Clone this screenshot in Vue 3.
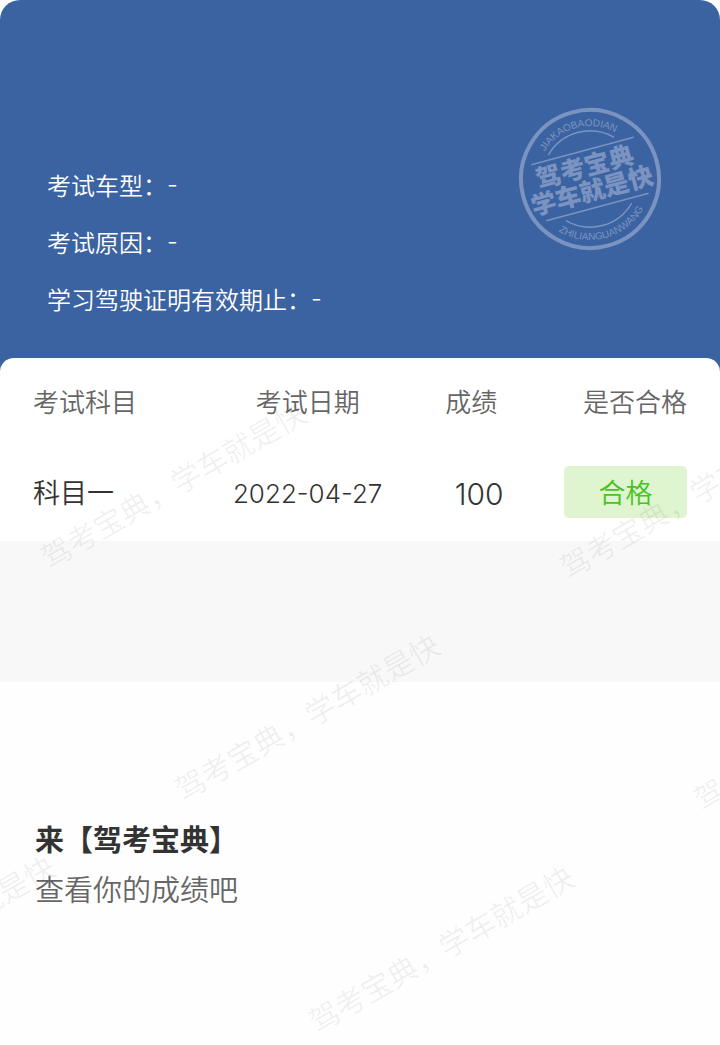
<script setup>
const info = [
  { label: '考试车型', value: '-' },
  { label: '考试原因', value: '-' },
  { label: '学习驾驶证明有效期止', value: '-' },
]

const results = [
  { subject: '科目一', date: '2022-04-27', score: '100', status: '合格' },
]

const marks = [
  { x: 49, y: 570 },
  { x: 568, y: 580 },
  { x: 183, y: 802 },
  { x: 702, y: 812 },
  { x: -202, y: 1024 },
  { x: 317, y: 1034 },
]
</script>

<template>
  <main class="page">
    <header class="hero">
      <dl class="info">
        <div v-for="item in info" :key="item.label" class="info-row">
          <dt>{{ item.label }}：</dt>
          <dd>{{ item.value }}</dd>
        </div>
      </dl>
      <svg class="stamp" viewBox="-72 -72 144 144" role="img" aria-label="驾考宝典 学车就是快">
        <defs>
          <path id="stamp-top" d="M-53 0A53 53 0 0 1 53 0" />
          <path id="stamp-bottom" d="M-61 0A61 61 0 0 0 61 0" />
        </defs>
        <g transform="rotate(-15)">
          <circle r="69" fill="none" stroke="currentColor" stroke-width="4" />
          <path
            d="M-34 -34A48 48 0 0 1 34 -34M-34 34A48 48 0 0 0 34 34M-53 -29H53M-53 29H53"
            fill="none"
            stroke="currentColor"
            stroke-width="1.4"
          />
          <text class="stamp-small" text-anchor="middle">
            <textPath href="#stamp-top" startOffset="50%">JIAKAOBAODIAN</textPath>
          </text>
          <text class="stamp-small" text-anchor="middle">
            <textPath href="#stamp-bottom" startOffset="50%">ZHILIANGUANWANG</textPath>
          </text>
          <text class="stamp-title" x="-2" y="-4" text-anchor="middle">驾考宝典</text>
          <text class="stamp-title" x="-1" y="21" text-anchor="middle">学车就是快</text>
        </g>
      </svg>
    </header>

    <section class="card">
      <table class="scores">
        <thead>
          <tr>
            <th class="subject" scope="col">考试科目</th>
            <th class="date" scope="col">考试日期</th>
            <th class="score" scope="col">成绩</th>
            <th class="status" scope="col">是否合格</th>
          </tr>
        </thead>
        <tbody>
          <tr v-for="row in results" :key="row.subject">
            <td class="subject">{{ row.subject }}</td>
            <td class="date">{{ row.date }}</td>
            <td class="score">{{ row.score }}</td>
            <td class="status"><span class="badge">{{ row.status }}</span></td>
          </tr>
        </tbody>
      </table>
    </section>

    <div class="band"></div>

    <footer class="promo">
      <h2>来【驾考宝典】</h2>
      <p>查看你的成绩吧</p>
    </footer>

    <svg class="watermark" aria-hidden="true">
      <text
        v-for="(m, i) in marks"
        :key="i"
        :transform="`translate(${m.x} ${m.y}) rotate(-30)`"
      >驾考宝典，学车就是快</text>
    </svg>
  </main>
</template>

<style>
body {
  background: #fff;
}
</style>

<style scoped>
.page {
  position: relative;
  overflow: hidden;
  min-height: 100vh;
  background: #fefefe;
  color: #333;
  font-family: "Noto Sans CJK SC", sans-serif;
  font-weight: 350;
}

.hero {
  display: flex;
  justify-content: space-between;
  align-items: flex-start;
  padding: 107px 58px 47px 47px;
  margin-bottom: -16px;
  border-radius: 20px 20px 0 0;
  background: #3b63a1;
  color: #fff;
}

.info {
  margin: 49px 0 0;
}

.info-row {
  display: flex;
  font-size: 24px;
  line-height: 57px;
}

.info-row dd {
  margin: 0;
  font-family: Inter, sans-serif;
}

.stamp {
  width: 144px;
  height: 144px;
  color: #7b93c1;
}

.stamp text {
  fill: currentColor;
}

.stamp-small {
  font: 400 10px "Liberation Sans", sans-serif;
}

.stamp-title {
  font-size: 25px;
  font-weight: 900;
}

.card {
  position: relative;
  padding: 0 33px;
  border-radius: 14px 14px 0 0;
  background: #fff;
}

.scores {
  width: 100%;
  border-collapse: collapse;
  table-layout: fixed;
  font-size: 26px;
}

.scores th,
.scores td {
  box-sizing: border-box;
  padding: 0;
  text-align: center;
}

.scores th {
  height: 84px;
  color: #666;
  font-weight: 350;
}

.scores td {
  height: 99px;
  font-size: 27px;
}

.scores .subject {
  width: 30%;
  text-align: left;
}

.scores .date {
  width: 24%;
}

.scores .score {
  width: 26%;
}

.scores .status {
  width: 20%;
  text-align: right;
}

.scores td.date {
  padding-top: 4px;
  font-family: Inter, sans-serif;
  font-size: 26px;
}

.scores td.score {
  padding: 4px 0 0 16px;
  font-family: Inter, sans-serif;
  font-size: 30px;
}

.badge {
  display: inline-block;
  width: 123px;
  border-radius: 5px;
  background: #def5d0;
  color: #49c41f;
  line-height: 52px;
  text-align: center;
  vertical-align: middle;
}

.band {
  height: 141px;
  background: #f8f8f8;
}

.promo {
  padding: 131px 35px;
  font-size: 29px;
  line-height: 50px;
}

.promo h2 {
  margin: 0;
  font-size: 29px;
  font-weight: 700;
}

.promo p {
  margin: 0;
  color: #666;
}

.watermark {
  position: absolute;
  inset: 0;
  width: 100%;
  height: 100%;
  pointer-events: none;
}

.watermark text {
  fill: #000;
  fill-opacity: 0.06;
  font-size: 30px;
  font-weight: 400;
}
</style>
